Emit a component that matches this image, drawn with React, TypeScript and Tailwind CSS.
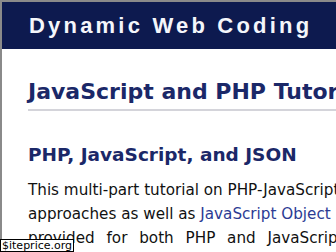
export default function App() {
  return (
    <div className="relative h-[252px] w-[336px] overflow-hidden bg-white">
      <div className="h-full w-[420px] border-l-2 border-t-2 border-[#8a8a8a]">
        <header className="flex h-[47px] items-center bg-[#0d1a4f] pl-[27px]">
          <span className="font-['Liberation_Sans',Arial,sans-serif] text-[22px] font-bold tracking-[3.2px] text-[#f4f6fb]">
            Dynamic Web Coding
          </span>
        </header>

        <main className="px-[26px] font-['DejaVu_Sans',Verdana,sans-serif]">
          <h1 className="mt-[30px] whitespace-nowrap border-b-2 border-[#d4d4da] pb-[4px] text-[22px] font-bold leading-[26px] text-[#1b2868]">
            JavaScript and PHP Tutorials
          </h1>

          <h2 className="mt-[33px] whitespace-nowrap text-[18.5px] font-bold leading-[22px] text-[#1b2868]">
            PHP, JavaScript, and JSON
          </h2>

          <div className="mt-[12px] text-[15.2px] leading-[24px] text-[#111]">
            <p className="whitespace-nowrap">
              This multi-part tutorial on PHP-JavaScript communication
            </p>
            <p className="whitespace-nowrap">
              approaches as well as{" "}
              <a className="text-[#2b3b94]">JavaScript Object Notation</a>
            </p>
            <p className="whitespace-nowrap [word-spacing:7px]">
              provided for both PHP and JavaScript.
            </p>
          </div>
        </main>
      </div>

      {/* watermark */}
      <div className="absolute bottom-0 left-0 border border-black bg-white px-px font-['DejaVu_Sans',sans-serif] text-[11px] leading-[11px] text-black">
        $iteprice.org
      </div>
    </div>
  );
}
